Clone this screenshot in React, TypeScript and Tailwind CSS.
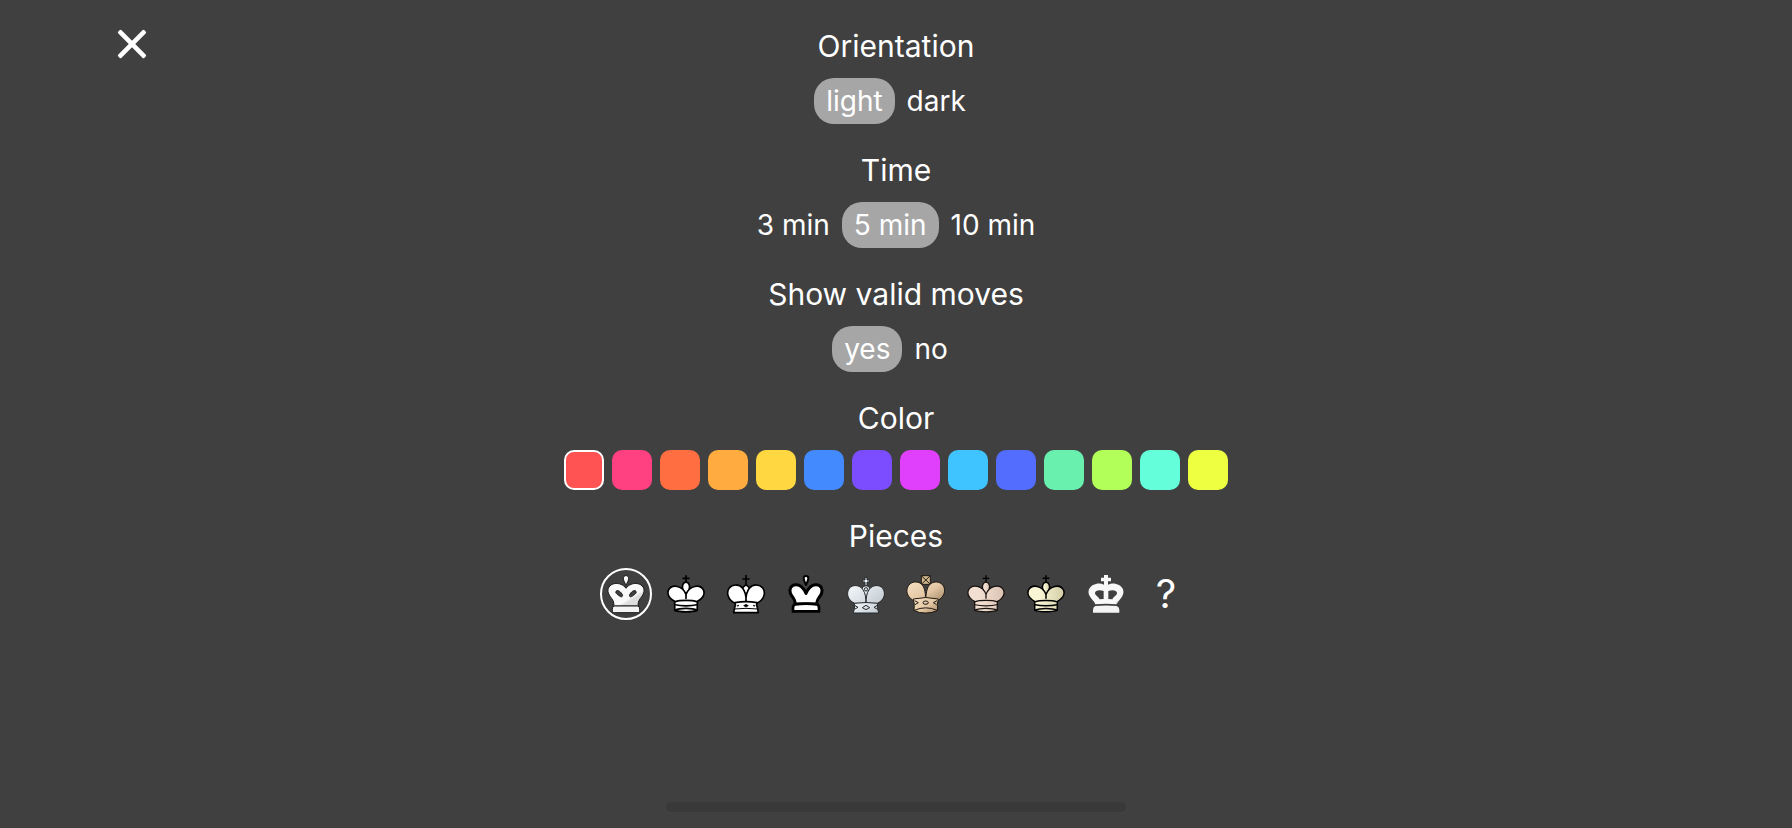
import { useState, type ReactNode } from "react";

const COLORS = [
  { name: "red", fill: "bg-[#ff5252]" },
  { name: "pink", fill: "bg-[#ff4081]" },
  { name: "deep orange", fill: "bg-[#ff6e40]" },
  { name: "orange", fill: "bg-[#ffab40]" },
  { name: "amber", fill: "bg-[#ffd740]" },
  { name: "blue", fill: "bg-[#448aff]" },
  { name: "deep purple", fill: "bg-[#7c4dff]" },
  { name: "purple", fill: "bg-[#e040fb]" },
  { name: "light blue", fill: "bg-[#40c4ff]" },
  { name: "indigo", fill: "bg-[#536dfe]" },
  { name: "green", fill: "bg-[#69f0ae]" },
  { name: "light green", fill: "bg-[#b2ff59]" },
  { name: "teal", fill: "bg-[#64ffda]" },
  { name: "lime", fill: "bg-[#eeff41]" },
];

const LOBES =
  "M78 106C78 92 77 76 68 64C58 50 38 49 28 61C18 75 22 96 44 106H112C134 96 138 75 128 61C118 49 98 50 88 64C79 76 78 92 78 106Z";

function ClassicKing({ fill, shade, accent = "#000", width = 1.6 }: { fill: string; shade: string; accent?: string; width?: number }) {
  const id = "classic" + fill.slice(1);
  return (
    <>
      <linearGradient id={id} x1="0" y1="0" x2="1" y2="0">
        <stop offset="0.3" stopColor={fill} />
        <stop offset="1" stopColor={shade} />
      </linearGradient>
      <g transform="translate(6 4) scale(3.2)" fill={`url(#${id})`} stroke={accent} strokeWidth={width} strokeLinecap="round" strokeLinejoin="round">
        <path fill="none" stroke="#000" d="M22.5 12V6M19.8 8.4h5.4" />
        <path d="M22.5 25s4.5-7.5 3-10.5c0 0-1-2.5-3-2.5s-3 2.5-3 2.5c-1.5 3 3 10.5 3 10.5" />
        <path d="M12 38.500c5 1.800 16 1.800 21 0l.2-8.500s8.300-4 5.800-10.500c-3.500-6.500-13.500-4-16.500 4V27v-3.500c-3-8-13-10.500-16.500-4-2.500 6.500 5.800 10.500 5.800 10.500z" />
        <path fill="none" d="M12 30.500c5-1.800 16-1.800 21 0M12.400 33.200c5 1.300 15.200 1.300 20.200 0M12 38.300c5-2.200 16-2.200 21 0" />
      </g>
    </>
  );
}

const PIECES: { name: string; art: ReactNode }[] = [
  {
    name: "rounded",
    art: (
      <g stroke="#1c1c1c" strokeWidth="3" strokeLinejoin="round">
        <linearGradient id="rounded" x1="0" y1="0" x2="1" y2="1">
          <stop offset="0.62" stopColor="#fafafa" />
          <stop offset="0.7" stopColor="#dedede" />
        </linearGradient>
        <path fill="#fafafa" d="M78 52C75 44 70 38 70 31C70 20 86 20 86 31C86 38 81 44 78 52Z" />
        <path fill="url(#rounded)" d="M78 61C72 51 56 44 43 47C28 50 21 62 25 75C29 89 42 93 42 110L38 114H118L114 110C114 93 127 89 131 75C135 62 128 50 113 47C100 44 84 51 78 61Z" />
        <path fill="#404040" d="M48 70C52 65 60 69 66 78C70 84 66 89 60 85C53 80 45 76 48 70ZM108 70C104 65 96 69 90 78C86 84 90 89 96 85C103 80 111 76 108 70Z" />
        <path fill="#f4f4f4" d="M42 114H114Q119 116 119 124V134H37V124Q37 116 42 114Z" />
      </g>
    ),
  },
  { name: "classic", art: <ClassicKing fill="#ffffff" shade="#ffffff" /> },
  {
    name: "merida",
    art: (
      <g fill="#fff" stroke="#000" strokeWidth="5" strokeLinejoin="round">
        <path fill="none" d="M78 21V48M67 33H89" />
        <path d="M78 50L89 60L78 84L67 60Z" />
        <path d="M78 102C79 86 76 72 68 61C57 47 37 48 27 61C18 75 24 95 45 106H111C132 95 138 75 129 61C119 48 99 47 88 61C80 72 77 86 78 102Z" />
        <path d="M45 104Q78 98 111 104Q108 111 112 119L115 134H41L44 119Q48 111 45 104Z" />
        <path fill="none" d="M43 123Q78 119 113 123" strokeWidth="3" />
        <path fill="#000" d="M71 113L78 109L85 113L78 117ZM51 113L57 112L53 115ZM105 113L99 112L103 115Z" strokeWidth="2" />
      </g>
    ),
  },
  {
    name: "bold",
    art: (
      <g fill="#fff" stroke="#000" strokeWidth="9" strokeLinejoin="round">
        <path strokeWidth="6" d="M78 51C74 42 71 37 71 31C71 22 85 22 85 31C85 37 82 42 78 51Z" />
        <path d="M78 76C71 60 60 49 47 50C33 51 27 63 31 75C34 86 48 94 45 108H111C108 94 122 86 125 75C129 63 123 51 109 50C96 49 85 60 78 76Z" />
        <path strokeWidth="8" strokeLinejoin="miter" d="M46 109Q78 105 110 109Q117 112 117 119V130H39V119Q39 112 46 109Z" />
      </g>
    ),
  },
  {
    name: "silver",
    art: (
      <g fill="url(#silver)" stroke="#252a2e" strokeWidth="3" strokeLinejoin="round">
        <linearGradient id="silver" x1="0" y1="0" x2="1" y2="0.6">
          <stop stopColor="#f5f9fb" />
          <stop offset="1" stopColor="#c9d1d7" />
        </linearGradient>
        <path fill="#eef6ff" d="M75 28H81V36H88V42H81V53H75V42H68V36H75Z" />
        <path d="M66 60Q78 46 90 60L78 96Z" />
        <path d={LOBES} />
        <circle cx="78" cy="64" r="5" />
        <path d="M43 106Q78 101 113 106Q111 114 113 122L116 135H40L43 122Q45 114 43 106Z" />
        <path fill="none" d="M67 119L78 112L89 119L78 125ZM44 112L54 118L43 124M112 112L102 118L113 124" />
      </g>
    ),
  },
  {
    name: "wood",
    art: (
      <g fill="url(#wood)" stroke="#211a13" strokeWidth="3" strokeLinejoin="round">
        <linearGradient id="wood" x1="0" y1="0" x2="1" y2="0.8">
          <stop stopColor="#f5dfc2" />
          <stop offset="0.6" stopColor="#e4c8a5" />
          <stop offset="1" stopColor="#b09473" />
        </linearGradient>
        <path fill="#d2b68c" d="M64 23H91V49H64ZM64 23L91 49M91 23L64 49" />
        <path d="M77 92C79 70 82 56 91 48C104 37 125 41 132 57C138 74 129 90 111 99H43C25 90 16 74 23 57C30 41 51 37 64 48C73 56 76 70 77 92Z" />
        <path d="M40 93Q77 84 115 93Q110 109 113 127Q96 136 77 135Q58 136 42 127Q45 109 40 93Z" />
        <path fill="none" d="M43 127Q77 112 112 127M44 98L55 104L45 110M111 98L100 104L110 110" />
        <ellipse cx="77" cy="104" rx="8" ry="5" />
      </g>
    ),
  },
  { name: "peach", art: <ClassicKing fill="#f3dfd1" shade="#dcc4b4" accent="#1a1412" width={1.2} /> },
  { name: "ivory", art: <ClassicKing fill="#f8f6d4" shade="#d3cea6" width={1.4} /> },
  {
    name: "solid",
    art: (
      <>
        <path fill="#f9f9f9" d="M72 21H84V29H93V40H84V50C95 44 107 46 117 51C130 58 134 72 127 84C122 94 113 99 110 109Q78 105 46 109C43 99 34 94 29 84C22 72 26 58 39 51C49 46 61 44 72 50V40H63V29H72Z" />
        <path fill="#404040" d="M71 69C58 64 46 67 45 74C44 82 56 85 59 94L71 93ZM85 69C98 64 110 67 111 74C112 82 100 85 97 94L85 93Z" />
        <path fill="#c9c9c9" d="M130 76Q123 96 107 104L110 109C113 99 126 92 130 76Z" />
        <path fill="#f4f4f4" d="M46 114Q78 111 110 114Q118 117 118 125V134H39V125Q39 117 46 114Z" />
      </>
    ),
  },
];

function Section({ title, children }: { title: string; children: ReactNode }) {
  return (
    <section className="flex flex-col items-center gap-3.5">
      <h2 className="text-[30px] leading-9">{title}</h2>
      {children}
    </section>
  );
}

function Choices({ label, options, initial }: { label: string; options: string[]; initial: string }) {
  const [value, setValue] = useState(initial);
  return (
    <div role="group" aria-label={label} className="flex">
      {options.map((option) => (
        <button
          key={option}
          type="button"
          aria-pressed={option === value}
          onClick={() => setValue(option)}
          className={`h-[46px] rounded-[20px] px-3 text-[28px] leading-[46px] ${option === value ? "bg-[#a6a6a6]" : ""}`}
        >
          {option}
        </button>
      ))}
    </div>
  );
}

export default function App() {
  const [color, setColor] = useState("red");
  const [piece, setPiece] = useState("rounded");

  return (
    <div className="flex min-h-screen flex-col justify-between bg-[#404040] pb-4 font-['Inter',sans-serif] text-white">
      <div className="grid grid-cols-[1fr_auto_1fr]">
        <div className="pt-6 pl-28">
          <button type="button" aria-label="Close" className="block size-10">
            <svg viewBox="0 0 40 40" className="size-10" fill="currentColor">
              <rect x="1.500" y="17.700" width="37" height="4.600" rx="1.500" transform="rotate(45 20 20)" />
              <rect x="1.500" y="17.700" width="37" height="4.600" rx="1.500" transform="rotate(-45 20 20)" />
            </svg>
          </button>
        </div>

        <main className="flex flex-col gap-7 pt-7">
          <Section title="Orientation">
            <Choices label="Orientation" options={["light", "dark"]} initial="light" />
          </Section>
          <Section title="Time">
            <Choices label="Time" options={["3 min", "5 min", "10 min"]} initial="5 min" />
          </Section>
          <Section title="Show valid moves">
            <Choices label="Show valid moves" options={["yes", "no"]} initial="yes" />
          </Section>
          <Section title="Color">
            <div role="group" aria-label="Color" className="flex gap-2">
              {COLORS.map(({ name, fill }) => (
                <button
                  key={name}
                  type="button"
                  aria-label={name}
                  aria-pressed={name === color}
                  onClick={() => setColor(name)}
                  className={`size-10 rounded-[10px] ${fill} ${name === color ? "border-2 border-white" : ""}`}
                />
              ))}
            </div>
          </Section>
          <Section title="Pieces">
            <div role="group" aria-label="Pieces" className="flex gap-2">
              {PIECES.map(({ name, art }) => (
                <button
                  key={name}
                  type="button"
                  aria-label={name}
                  aria-pressed={name === piece}
                  onClick={() => setPiece(name)}
                  className={`size-[52px] rounded-full ${name === piece ? "outline-2 -outline-offset-2 outline-white" : ""}`}
                >
                  <svg viewBox="0 0 156 156" className="size-[52px]">
                    {art}
                  </svg>
                </button>
              ))}
              <button
                type="button"
                aria-pressed={piece === "random"}
                onClick={() => setPiece("random")}
                className={`size-[52px] rounded-full text-[40px] leading-[52px] ${piece === "random" ? "outline-2 -outline-offset-2 outline-white" : ""}`}
              >
                ?
              </button>
            </div>
          </Section>
        </main>
      </div>

      <div className="mx-auto h-2.5 w-[460px] rounded-full bg-[#393939]" />
    </div>
  );
}
